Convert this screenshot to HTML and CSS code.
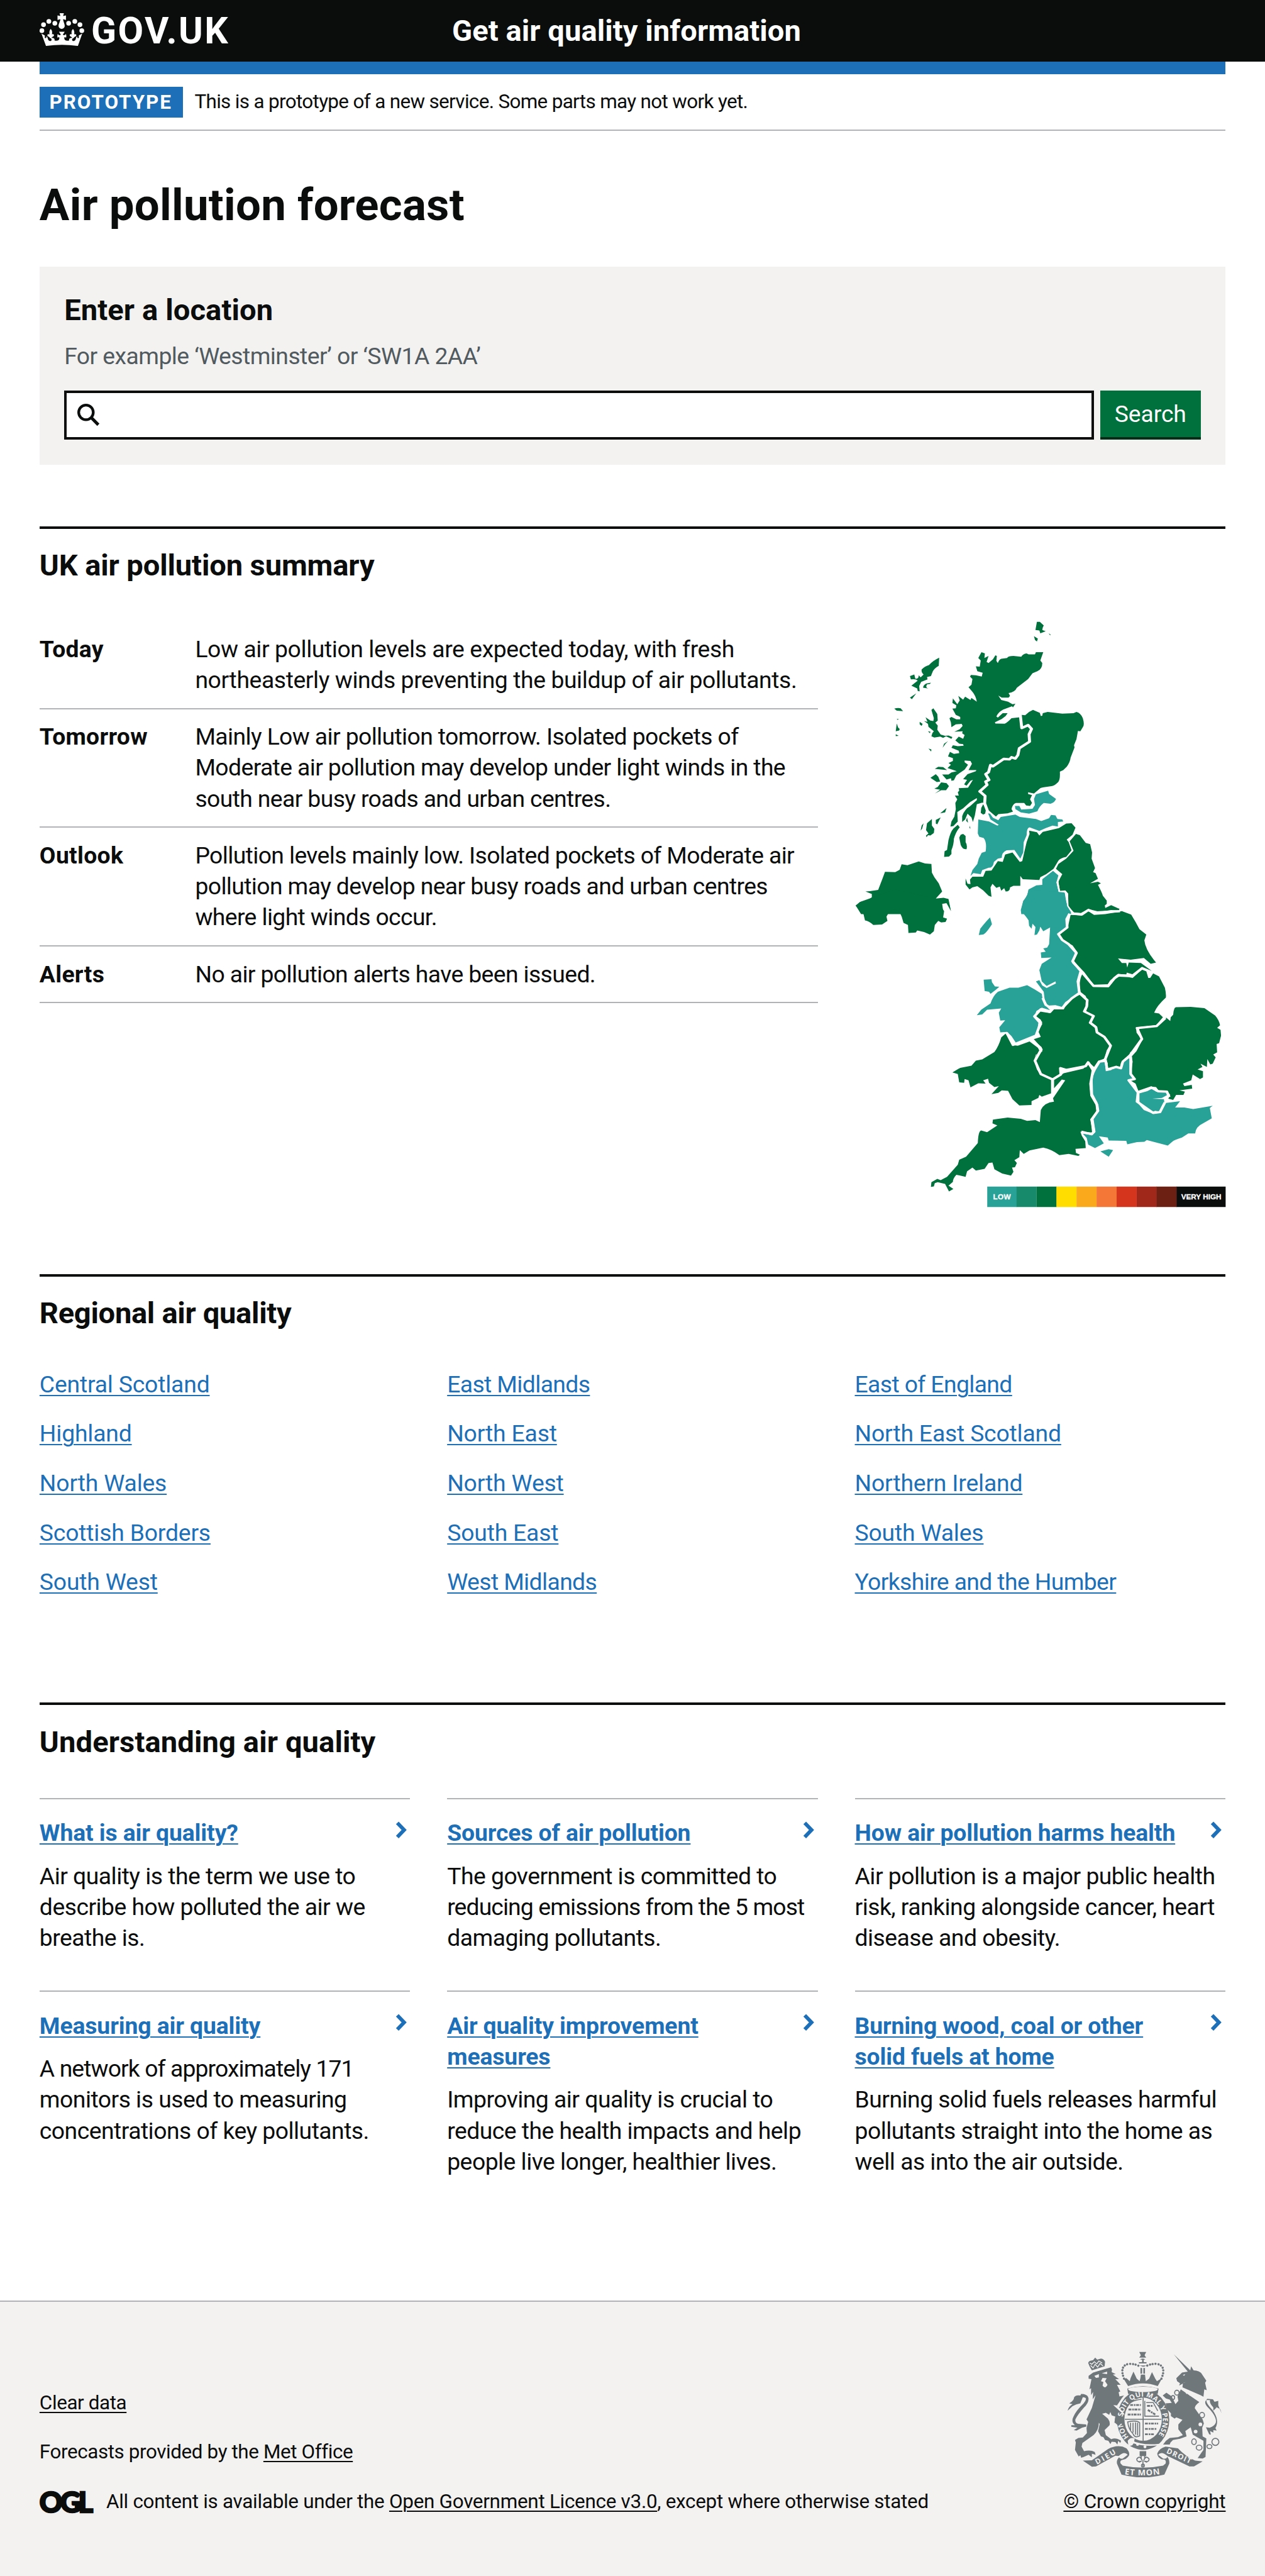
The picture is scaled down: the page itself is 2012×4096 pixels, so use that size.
FILE: index.html
```html
<!DOCTYPE html>
<html lang="en">
<head>
<meta charset="utf-8">
<title>Air pollution forecast - GOV.UK</title>
<link rel="stylesheet" href="styles.css">
</head>
<body>
<header class="header">
  <div class="header-logo">
    <svg class="crown" viewBox="24 33 216 159" aria-hidden="true">
      <g fill="#fff">
        <path d="M121 33H142L138 47L152 44V66L138 62C138 70 146 85 146 95A15 14 0 0 1 116 95C116 85 125 70 125 62L111 66V44L125 47Z"/>
        <circle cx="98" cy="82" r="11.500"/><circle cx="69" cy="73" r="11.500"/><circle cx="43" cy="89" r="11.500"/><circle cx="35" cy="118" r="11.500"/>
        <circle cx="165" cy="82" r="11.500"/><circle cx="195" cy="73" r="11.500"/><circle cx="220" cy="89" r="11.500"/><circle cx="229" cy="118" r="11.500"/>
        <path d="M55 192L33 132L49 141C51 150 46 154 53 154C58 154 56 149 58 145C66 151 62 166 74 168C84 169 86 156 74 154C73 147 66 148 62 142C60 136 67 132 72 136C71 126 70 119 78 109C87 119 85 127 84 136C90 132 96 137 93 143C90 148 83 147 82 153C91 151 100 157 96 165C106 169 119 167 120 156C121 148 116 147 112 153C109 146 110 141 112 134C116 141 124 141 127 137L118 123H146L137 137C140 141 148 141 152 134C154 141 155 146 152 153C148 147 143 148 144 156C145 167 158 169 168 165C164 157 173 151 182 153C181 147 174 148 171 143C168 137 174 132 180 136C179 127 177 119 186 109C194 119 193 126 192 136C197 132 204 136 202 142C198 148 191 147 190 154C178 156 180 169 190 168C202 166 198 151 206 145C208 149 206 154 211 154C218 154 213 150 215 141L231 132L210 192Q132 181 55 192Z"/>
      </g>
    </svg>
    <span class="header-logotype">GOV.UK</span>
  </div>
  <a class="header-title">Get air quality information</a>
</header>

<div class="container">
  <div class="blue-bar"></div>
  <div class="phase-banner"><strong class="tag">PROTOTYPE</strong><span class="phase-text">This is a prototype of a new service. Some parts may not work yet.</span></div>

  <main>
    <h1>Air pollution forecast</h1>

    <form class="search">
      <h2>Enter a location</h2>
      <p class="hint">For example ‘Westminster’ or ‘SW1A 2AA’</p>
      <div class="search-row">
        <div class="search-input">
          <svg class="search-icon" viewBox="0 0 36 36" aria-hidden="true"><circle cx="14" cy="14" r="11.800" fill="none" stroke="#0b0c0c" stroke-width="4.400"/><path d="M22.500 22.500L34 34" stroke="#0b0c0c" stroke-width="5"/></svg>
        </div>
        <button type="button" class="search-button">Search</button>
      </div>
    </form>

    <section class="section summary">
      <h2>UK air pollution summary</h2>
      <div class="summary-grid">
        <dl class="summary-list">
          <div class="summary-row"><dt>Today</dt><dd>Low air pollution levels are expected today, with fresh<br>northeasterly winds preventing the buildup of air pollutants.</dd></div>
          <div class="summary-row"><dt>Tomorrow</dt><dd class="tight">Mainly Low air pollution tomorrow. Isolated pockets of<br>Moderate air pollution may develop under light winds in the<br>south near busy roads and urban centres.</dd></div>
          <div class="summary-row"><dt>Outlook</dt><dd class="tight">Pollution levels mainly low. Isolated pockets of Moderate air<br>pollution may develop near busy roads and urban centres<br>where light winds occur.</dd></div>
          <div class="summary-row"><dt>Alerts</dt><dd class="tight">No air pollution alerts have been issued.</dd></div>
        </dl>
        <svg class="map" viewBox="1384 1006 600 956" role="img" aria-label="Map of UK air pollution by region">
          <!-- Scotland and northern England -->
          <g transform="translate(1370 980) scale(.39541 .33333)" fill="#00703c">
            <path d="M780 80L792 80L808 98Q802 110 802 120L816 126L794 136L790 122L774 120ZM768 150L784 162L780 176L772 168ZM828 136L836 142L834 146Z"/>
            <path d="M380 254L378 294Q362 304 354 320L346 344L330 348L332 360L306 372L298 392L300 418L292 416L290 404L266 390L292 366Q284 356 264 360L260 344L278 336L282 356Q296 360 296 340L304 350L316 336Q306 326 308 312Q320 296 338 290Q352 270 380 254ZM326 380L346 376L342 382L330 384Q322 400 336 404L314 400Q314 388 326 380ZM286 428L268 456L260 448ZM196 502Q210 496 222 500L232 514L206 512ZM206 552L214 552L210 557ZM206 574L212 594L218 600L216 608L202 612ZM202 626L214 634L202 635Z"/>
            <path d="M356 500L372 528L374 560L364 570L374 584L372 604L386 628L404 634L418 632L434 640L430 648L408 636L396 644L384 638L360 642L348 636L352 620L358 612L336 590L334 576L318 562L332 566L324 544L344 560L356 562L358 548L348 508ZM416 660L406 672L394 692L400 672ZM300 566L312 576L308 586L300 578ZM334 612L344 614L342 622ZM336 696L348 700L347 710Z"/>
            <path d="M362 794L376 784L396 786L412 800ZM344 838L366 820L376 832L384 856L370 858ZM360 890L374 882L388 860L410 864L420 878L408 898L388 898L362 914L384 896ZM410 984L404 1006L384 1010ZM386 1030L380 1044L372 1064L366 1060L366 1042ZM350 1038L350 1070L360 1086L358 1106L344 1118L334 1116L328 1126L326 1118L336 1108L326 1092L330 1058ZM316 1058L310 1084L304 1094L308 1070Z"/>
            <path d="M456 1066L464 1078Q448 1100 440 1134Q440 1160 430 1190L430 1208L420 1220L400 1222L402 1194L412 1188L418 1140Q426 1100 438 1084ZM478 1110L488 1120L488 1150Q496 1164 492 1184Q476 1188 468 1164L462 1128L468 1114ZM560 966L572 990L568 1012L560 1016L550 1008L552 984ZM494 1030L498 1056L490 1046ZM504 1070L508 1084L504 1082Z"/>
            <path d="M553 228L567 234L565 256L582 246L574 275L582 280L600 262L610 243L616 246L614 270L620 280Q626 262 634 260L658 256Q662 246 684 246L716 250Q722 236 738 234L746 238L772 238L776 228L806 228L794 268L802 280Q802 310 782 320L762 330L744 358L698 400Q690 422 664 426L670 440L664 448L636 448L622 438L634 460L662 468L680 480L692 478L682 496L678 490L642 506Q620 520 614 540L620 545L640 524L660 524L652 538L636 552L608 568L610 574L648 575Q660 568 676 548L716 543L718 532L732 534L748 518L764 508L792 522L796 538L802 536L804 524L824 518L884 526L930 524L942 518Q960 524 968 548Q976 580 968 592L958 612L948 610L942 650L932 680L934 690L918 740Q916 762 902 784L888 800L874 808Q876 850 866 860Q850 878 840 878Q800 884 794 888L768 914L744 908L744 916L760 922L752 942L760 960L752 974L736 972L728 960L694 960Q680 966 676 990L682 1002L660 1010L622 1014L612 1026L594 1014L580 996L568 962L556 958L534 966L526 1020L518 1052L512 1030L496 1012L486 1040L474 1052L474 1024Q484 990 506 976L534 946L534 936L506 956L478 986L454 1004L456 1050L438 1072L426 1074L430 1050L442 1026L448 990L446 960L454 942L444 924L460 924L456 908L462 900L460 888L498 886L518 848L508 852L492 876L482 870L494 848L478 844L496 820L530 806L532 800L500 800L514 770L508 756L484 754L484 762L498 774L484 798L450 826L440 850L430 852L428 840L410 846L392 822L418 822L430 812L452 806L414 790L428 774L418 766L436 756L436 742L416 734L424 712L440 722L462 718L460 706L430 692L436 680L456 684L480 682L478 674L462 672L446 656L460 638L478 648L484 630L474 622L476 612L442 614L464 602L476 586L472 576L448 578L430 592L428 570L422 548L430 542L450 554L466 554L466 542L448 532L434 502L448 500L450 486L434 474L436 452L454 480L464 462L458 440L478 458L486 444L508 460L512 450L534 468Q530 440 516 420L500 398L512 386L516 358L506 346L510 338L530 340L554 346L558 328L536 320L530 296L546 298L550 268L540 256Z"/>
            <path fill="none" stroke="#fff" stroke-width="12" stroke-linejoin="round" d="M712 532L718 596L744 582L758 600L748 626L750 662L708 694L702 728L692 744L676 738L668 748L644 746L600 782L590 776L582 810L570 820L584 848L570 856L576 872L546 904L568 926L566 962L578 1000L612 1034"/>
            <path fill="#28a197" d="M776 918L826 900L830 916L858 940Q856 954 836 964L808 960Q790 976 782 1000L748 1012L714 1006L692 990L690 974L708 974L716 992L762 988L772 970L768 940ZM540 1040L584 1050L618 1070L624 1066L590 1040L580 1010L588 1012L600 1032L622 1044L632 1028L692 1016L710 1028L776 1038L798 1048L830 1034L838 1018L856 1020L864 1038L884 1040L888 1050L866 1052L866 1074L844 1070L816 1082L790 1096L750 1078Q738 1080 738 1116L726 1150L724 1200L712 1230L688 1188L656 1190Q636 1200 636 1226L620 1230L604 1246Q600 1276 584 1274L556 1286L550 1306L520 1300L508 1314L516 1286L536 1256L542 1230L554 1202L570 1196Q576 1150 562 1130L544 1124L538 1108Z"/>
            <path d="M748 1094L780 1102L790 1118L804 1100L870 1082L900 1060L922 1058L938 1080L926 1114L902 1138L910 1150L922 1190L900 1222Q876 1228 868 1240L848 1280L818 1306L794 1320L790 1334L722 1330L712 1314L712 1362L684 1362L670 1370Q670 1390 652 1390L646 1374L634 1386L628 1366L614 1372L598 1352L590 1370L594 1416L582 1410L560 1384L536 1364L516 1370L504 1380L488 1356L488 1326L496 1352L508 1354L506 1332L516 1318L560 1318L570 1290L594 1288L620 1242L640 1246L650 1210L680 1200L710 1246L720 1242L730 1190L738 1150L750 1110Z"/>
            <path d="M940 1110L956 1116L980 1154L998 1160L1006 1200L1004 1230L1018 1276L1010 1296L1020 1300L1030 1328L998 1350L1030 1342L1042 1350L1030 1358Q1046 1394 1050 1410L1066 1434L1066 1450L1058 1458L1060 1470L1084 1456L1118 1474L1116 1482L1084 1480L1050 1486L1024 1490L992 1474L960 1494L932 1492L908 1460L908 1400L896 1384L874 1388L868 1340L884 1306L858 1280L868 1256L900 1230L930 1192L914 1146Z"/>
            <path fill="#28a197" d="M846 1290L868 1312L860 1346L870 1394L894 1396L900 1440L922 1500H716L714 1480L724 1436Q744 1408 746 1380L778 1360L802 1358L802 1330Z"/>
            <path fill="none" stroke="#fff" stroke-width="7" stroke-linejoin="round" d="M848 1284L876 1308L864 1344L872 1390L896 1390L904 1406L906 1460L926 1494"/>
            <path d="M38 1458L56 1440L80 1438L104 1418L104 1402L78 1390L96 1388L130 1382L148 1326L158 1294L200 1296L218 1284L226 1258L250 1262L296 1244L322 1254L348 1256L350 1298L360 1320L378 1350L392 1390L366 1424L398 1420L418 1426L428 1485L410 1446L392 1450L398 1500H60Z"/>
          </g>
          <!-- Northern Ireland, England and Wales -->
          <g transform="translate(1370 1440) scale(.39541 .33801)" fill="#00703c">
            <path d="M38 78L70 118L76 148Q92 150 110 170L146 168L168 150L164 130Q176 100 196 96Q212 96 218 108Q228 130 234 160L252 170L254 208L284 206L290 196L318 204L342 216L358 200L362 170L376 150L388 158L406 156L412 140L396 134L400 104L388 82L392 66L404 62Q420 68 428 104L416 46L368 44L200 0L60 58Z"/>
            <path fill="#28a197" d="M588 134L596 166Q570 214 558 216L542 218L548 188Q574 150 588 134ZM746 0L740 30L724 56L716 104Q736 130 746 148L748 174L758 188L762 164L774 180L770 218L780 216L790 196L794 178L806 200L834 182L830 262L822 278L806 282L816 298L796 302L798 328L840 326L800 356L790 386L800 440L820 462L856 440L858 450L820 472L802 460L790 434L776 440L808 490L812 530L824 556L856 554L882 562L896 540L950 496L944 440L958 394L924 352L936 302L908 260L884 244L864 212L900 180L898 140L920 110L904 80L896 40L892 14Z"/>
            <path d="M918 122L964 124L990 104L1014 122L1060 118L1128 104L1166 120L1184 156L1200 190L1228 216L1220 244Q1224 290 1268 350L1246 356L1218 328L1164 336L1112 330L1128 352L1146 352L1150 374L1156 350L1206 352L1250 390L1210 370L1184 404L1172 406L1148 398L1146 408L1112 404L1080 436L1070 454L1012 456L974 396L946 362L930 340L946 300L926 268L884 240L874 214L906 184Z"/>
            <path d="M966 404L1012 466L1074 468L1100 430L1116 418L1156 420L1172 424L1210 384L1228 392L1236 424L1244 424L1256 402L1280 416L1304 470Q1310 500 1308 518Q1272 556 1260 590L1280 594L1296 612L1268 650L1186 660L1188 686L1206 714L1188 760L1162 780L1160 796L1124 830L1122 850L1104 844L1090 862L1068 856L1070 832L1060 806L1070 770L1084 748L1060 706L1026 680L1020 650L998 636L1016 610L980 590L990 550L980 510L958 490Q950 440 966 404Z"/>
            <path d="M1310 614L1326 630L1328 612L1338 600Q1340 564 1350 564L1410 562L1466 568L1510 604Q1526 626 1530 650L1518 662L1532 672L1534 700L1526 736L1516 740L1518 780L1502 790L1512 804L1500 834L1490 838L1478 812L1476 850L1450 834L1458 850L1438 862L1460 870L1460 900L1448 908L1418 886L1412 914L1378 930L1384 942L1414 936L1416 954L1364 962L1386 968L1380 984L1350 984L1338 1008L1318 1002L1326 984L1312 964L1278 962L1268 946L1246 944L1228 958L1196 966L1184 930L1160 912L1184 908L1166 880L1172 824L1168 800L1188 774L1214 716L1196 680L1200 666L1272 656L1286 634Z"/>
            <path fill="#28a197" d="M1158 808L1168 830L1160 884L1182 906L1152 914L1172 930L1190 970L1188 1016L1218 1056L1256 1074L1284 1070L1308 1022L1366 1014L1346 1044L1384 1044L1420 1052L1500 1036L1488 1046L1496 1096L1460 1120Q1430 1136 1428 1168L1400 1168L1374 1188Q1340 1200 1334 1208L1316 1226L1230 1200L1220 1208L1190 1210L1150 1220L1146 1204L1074 1202L1070 1188L1034 1182L1054 1216L1018 1238L990 1222L984 1190L968 1170L1006 1176L1020 1160L1012 1100L1034 1060L1028 1020L1010 980L1008 900L1034 826L1058 822L1062 870L1082 866L1104 854L1122 860L1136 826ZM1200 976L1232 966L1252 954L1268 968L1312 972L1314 984L1292 998L1252 1002L1300 1004L1302 1020L1284 1064L1264 1060L1252 1066L1218 1040L1200 1018ZM1040 1254L1074 1244L1092 1248L1074 1280Z"/>
            <path d="M960 502L980 530L984 550L970 584L1006 606L994 640L1018 660L1026 688L1052 706L1078 748L1066 770L1056 810L1030 822L1014 850L988 822L970 850L904 862L874 850L880 888L846 906L796 880Q774 850 768 820L780 786L802 776L800 756L764 718L796 706L786 680L802 644L796 624L776 606L790 584L834 592L848 574L890 574L900 552L926 520Z"/>
            <path fill="#28a197" d="M668 470L704 470L740 458L770 478L800 500L804 532L824 566L834 578L800 566L778 582L768 614L786 638L780 690L770 706L730 722L696 738L676 702L658 682L630 684L626 660L650 626L630 628L624 590L634 570L576 576L556 598L534 602L552 576L590 546Q600 510 620 490ZM562 432L594 430L596 444L608 464L626 466L612 480L590 500L584 490L566 486Z"/>
            <path d="M652 690L672 722L682 746L702 748L750 728L784 758L794 780L776 790L768 820L780 862L794 886L812 890L838 910L838 976L800 992L790 984L786 998L758 1014L758 1032L708 1034L680 1004L662 964L636 962L622 974L594 980L624 942L606 946L584 926L580 906L560 914L570 930L540 928L508 948L500 914L484 908L482 926L462 924L456 884L434 876L466 854L512 844L530 820L556 814L606 778Q624 750 634 708Z"/>
            <path d="M850 910L890 880L970 858L990 836L1006 870L996 930L1000 990L1020 1030L1024 1070L1000 1100L1006 1164L958 1160L964 1180L978 1206L980 1238L938 1242L940 1262L956 1270L950 1276L910 1266L872 1272Q840 1244 806 1236L750 1250L726 1266L710 1248L708 1282L688 1296L698 1310L690 1330L678 1332L684 1352L674 1370L638 1360L606 1340L598 1308L582 1310L566 1338L530 1346L516 1332L494 1350L488 1376L450 1366Q436 1384 436 1400L418 1418L438 1434L420 1446L404 1410L374 1402L362 1406L358 1422L346 1424L348 1402L372 1386L386 1392L412 1376L456 1318L462 1294L490 1280L538 1214Q540 1156 552 1154L576 1162L618 1130L598 1120L600 1102L660 1092L714 1098L740 1108L774 1104L792 1114L796 1056Q810 1020 850 1016L846 1000L896 914L882 910L850 952Z"/>
            <path fill="none" stroke="#fff" stroke-width="11" stroke-linejoin="round" d="M920 114L964 120L990 99L1026 110L1120 104M914 116L902 142L904 182L868 214L884 242L910 262L942 304L926 344L960 390L1012 462H1072L1098 424L1114 410L1170 414L1212 376M960 390L948 440L954 496L986 530L984 560L974 584L1012 606L998 638L1022 660L1026 684L1056 706L1082 748L1060 812L1068 862L1104 850L1124 856L1132 824L1160 796L1210 716L1190 664L1270 654L1306 616M954 496L922 522L884 568H836L816 552L804 520M846 570L834 586L796 574L770 608L796 636L776 700L682 744L656 686M760 716L798 766L772 820L796 884L844 910L844 980M844 910L878 886L876 856L900 864L980 846L990 828L1010 864L1000 930L1004 986L1026 1030L1030 1060L1004 1102L1014 1160L1004 1172L962 1160M1012 870L1036 824L1062 820M1164 800L1164 884L1180 908L1156 914L1194 972L1190 1016L1256 1070L1284 1066L1304 1020M1194 970L1248 948L1276 966L1312 968L1322 994"/>
          </g>
          <!-- Index scale -->
          <g>
            <path fill="#28a197" d="M1598 1921h48v33h-48z"/><path fill="#168a6b" d="M1645.500 1921h32.500v33h-32.500z"/><path fill="#00703c" d="M1678 1921h32.500v33H1678z"/><path fill="#fd0" d="M1710 1921h32.500v33H1710z"/><path fill="#faa91c" d="M1742.500 1921h32.500v33h-32.500z"/><path fill="#f47738" d="M1775 1921h32.500v33H1775z"/><path fill="#d4351c" d="M1807.500 1921h32.500v33h-32.500z"/><path fill="#a0281a" d="M1840 1921h32.500v33H1840z"/><path fill="#6c2014" d="M1872 1921h33v33h-33z"/><path fill="#0b0c0c" d="M1904.500 1921H1984v33h-79.500z"/>
            <text x="1607.500" y="1942" class="scale-label" textLength="28.500">LOW</text>
            <text x="1912" y="1942" class="scale-label" textLength="65">VERY HIGH</text>
          </g>
        </svg>
      </div>
    </section>

    <section class="section regions">
      <h2>Regional air quality</h2>
      <ul class="region-list">
        <li><a>Central Scotland</a></li><li><a class="tight">East Midlands</a></li><li><a class="tight">East of England</a></li>
        <li><a>Highland</a></li><li><a>North East</a></li><li><a>North East Scotland</a></li>
        <li><a>North Wales</a></li><li><a>North West</a></li><li><a>Northern Ireland</a></li>
        <li><a>Scottish Borders</a></li><li><a>South East</a></li><li><a>South Wales</a></li>
        <li><a>South West</a></li><li><a class="tight">West Midlands</a></li><li><a class="tight">Yorkshire and the Humber</a></li>
      </ul>
    </section>

    <section class="section topics">
      <h2>Understanding air quality</h2>
      <div class="cards">
        <article class="card"><div class="card-head"><h3><a>What is air quality?</a></h3><svg class="chevron" viewBox="0 0 19 28"><path d="M3 2.500L14 14L3 25.500"/></svg></div><p>Air quality is the term we use to<br>describe how polluted the air we<br>breathe is.</p></article>
        <article class="card"><div class="card-head"><h3><a>Sources of air pollution</a></h3><svg class="chevron" viewBox="0 0 19 28"><path d="M3 2.500L14 14L3 25.500"/></svg></div><p>The government is committed to<br><span class="tighter">reducing emissions from the 5 most</span><br>damaging pollutants.</p></article>
        <article class="card"><div class="card-head"><h3><a>How air pollution harms health</a></h3><svg class="chevron" viewBox="0 0 19 28"><path d="M3 2.500L14 14L3 25.500"/></svg></div><p>Air pollution is a major public health<br>risk, ranking alongside cancer, heart<br>disease and obesity.</p></article>
        <article class="card"><div class="card-head"><h3><a>Measuring air quality</a></h3><svg class="chevron" viewBox="0 0 19 28"><path d="M3 2.500L14 14L3 25.500"/></svg></div><p><span class="tighter">A network of approximately 171</span><br>monitors is used to measuring<br>concentrations of key pollutants.</p></article>
        <article class="card"><div class="card-head"><h3><a>Air quality improvement<br>measures</a></h3><svg class="chevron" viewBox="0 0 19 28"><path d="M3 2.500L14 14L3 25.500"/></svg></div><p>Improving air quality is crucial to<br>reduce the health impacts and help<br>people live longer, healthier lives.</p></article>
        <article class="card"><div class="card-head"><h3><a>Burning wood, coal or other<br>solid fuels at home</a></h3><svg class="chevron" viewBox="0 0 19 28"><path d="M3 2.500L14 14L3 25.500"/></svg></div><p>Burning solid fuels releases harmful<br>pollutants straight into the home as<br>well as into the air outside.</p></article>
      </div>
    </section>
  </main>
</div>

<footer class="footer">
  <div class="footer-meta">
    <p><a>Clear data</a></p>
    <p>Forecasts provided by the <a>Met Office</a></p>
    <p class="licence"><span class="ogl">OGL</span><span class="licence-text">All content is available under the <a>Open Government Licence v3.0</a>, except where otherwise stated</span></p>
  </div>
  <div class="footer-crest">
    <svg class="crest" viewBox="144 78 750 612" aria-hidden="true">
      <g fill="#6f777b">
        <!-- lion -->
        <path d="M246 196L268 180L354 152L360 166L358 178L378 188L364 190L394 212L376 212L402 240L384 240L400 272L392 276L396 296L418 292L408 304L384 340L414 376L420 436L398 436L388 424L372 424L376 394L358 388L352 372L346 386L330 376L312 380L340 404Q352 420 348 436L324 460L330 484L356 504Q380 494 404 512L400 522L390 512L386 530L376 518L358 516L352 528L342 512L326 508L318 494L306 490L292 466L300 430L296 424Q296 460 270 484L216 522L212 540L224 562Q256 554 276 566L280 580L262 574V592L246 580L222 590L210 594L206 582L198 588L180 556L184 520L180 508L196 498L218 496L238 474L236 450L244 420L236 408L262 352L280 290L266 310L268 274L258 290V256L250 262L260 212L246 210Z"/>
        <path d="M244 134Q246 126 252 124L268 120L278 108L288 118L306 112Q322 114 326 128L324 150L262 170Q250 152 244 134Z"/>
        <path d="M144 366Q150 344 168 334L152 330Q174 318 176 300Q184 288 206 292L210 284Q244 284 246 308Q246 330 222 352Q190 388 182 408Q178 430 206 430L234 432L236 442L214 448L188 462L174 460L192 448L162 444V436L180 436Q160 420 172 396Q184 366 222 330Q246 300 218 300L206 330Q184 334 168 344Z"/>
        <!-- unicorn -->
        <path d="M660 92L740 170L744 150L756 170Q786 170 798 190L818 220L812 230L820 266L808 262L804 298L790 290L702 252L704 232L720 226Q706 228 700 236L686 244L690 232L676 222L672 208L700 180L728 176Z"/>
        <path d="M694 262L784 324Q762 340 762 354L800 408L806 428L798 448L800 490L818 500L816 550L814 590L800 598L776 596L794 570L804 556L804 512L752 482L742 446L716 464L722 490L690 502L656 508L644 520L640 530L608 530L622 512L640 498L680 494L704 484L682 456L682 432L702 410L672 398L664 404L646 392V378L628 360L620 330L650 328L640 312L622 306L606 292L624 278L650 296L668 334L682 318L678 296Z"/>
        <path d="M892 378L886 358L858 344L868 350L852 366L852 350Q830 326 836 314L818 314Q802 328 832 356Q870 398 864 424Q858 440 834 448L816 446L832 480L840 482L836 464L852 472V460L868 462L862 450Q884 412 848 362Q808 322 822 308L850 310L858 322L876 318L876 340Z"/>
        <!-- crown -->
        <path d="M438 246L416 210L430 208L446 222L450 208L464 176L480 210L494 222L498 206L500 190H520L524 222L540 210L554 178L570 210L578 222L604 206L582 246Q510 220 438 246Z"/>
        <path d="M492 80H526L518 96L526 108H492L500 96ZM490 136Q492 112 509 112Q526 112 528 136ZM494 146H526Q520 152 510 152ZM498 158h8v28h-8zM512 158h8v28h-8z"/>
        <path fill="none" stroke="#6f777b" stroke-width="11" stroke-linecap="round" stroke-dasharray="0.100 13.500" d="M418 210Q394 146 442 138Q478 138 496 152M600 210Q626 146 576 138Q540 138 522 152"/>
        <path d="M434 258Q510 236 586 258L582 284H438Z"/>
        <ellipse cx="511" cy="409" rx="127" ry="147"/>
        <path d="M218 608L262 606Q300 580 340 552Q390 526 430 548Q448 568 442 584Q430 600 420 602Q394 606 402 622L412 632Q510 652 608 632L620 622Q626 600 602 602Q578 590 580 572Q590 548 620 540L680 548Q720 590 764 608L800 612L758 636L736 636L640 590L624 584Q640 600 638 622L614 676Q560 690 510 690T406 676L384 622Q380 600 402 586L376 584L282 636L262 638Z"/>
        <path d="M494 562h32v24h-32z"/>
      </g>
      <g fill="#f3f2f1">
        <path d="M274 196L296 188V204L282 206ZM310 184L336 176V188ZM314 206L334 208L326 222L338 240Q326 262 314 244L318 226L306 222ZM704 192L716 188L710 196ZM248 178L356 148L354 155L252 184Z"/>
        <ellipse cx="510" cy="262" rx="72" ry="13"/><path d="M490 118h16v12h-16zM514 118h14v12h-14z"/>
        <ellipse cx="511" cy="407" rx="91" ry="105"/>
        <path d="M392 586Q420 560 436 580L412 598Q396 602 392 586ZM630 586Q600 560 584 580L608 598Q626 602 630 586Z"/>
        <path d="M384 340L418 378L420 388L366 338ZM436 512Q448 492 470 500L466 522L458 534L440 538Z"/>
        <circle cx="484" cy="529" r="7"/><circle cx="520" cy="541" r="7"/><circle cx="789" cy="432" r="9"/><circle cx="766" cy="467" r="9"/>
        <path d="M456 510Q510 536 590 526L586 534Q510 542 452 520Z"/>
      </g>
      <g fill="none" stroke="#f3f2f1" stroke-width="4"><path d="M702 264L784 308M710 262L722 282L730 268L738 290L748 276L756 298L766 286L772 306M256 146L268 158L278 140L290 154L302 136L316 148M252 134L262 140L274 128L286 138L296 124L312 134"/></g>
      <g fill="none" stroke="#6f777b" stroke-width="5">
        <path d="M422 407H600M511 302V512M430 348Q446 316 503 310M519 318V392H588M526 326H560L582 366"/>
        <path stroke-width="9" stroke-dasharray="14 4 8 3" d="M448 338H500M440 360H500M436 384H500M530 342H560M534 362L570 384M520 428H584M520 454H578M520 480H566"/>
        <path stroke-width="5" d="M436 420Q480 410 494 424V488Q470 500 462 478Q440 456 436 420ZM450 424V460M462 424V472M474 422V482M484 424V486"/>
        <ellipse cx="675" cy="278" rx="11" ry="12"/><ellipse cx="656" cy="302" rx="8" ry="10"/><ellipse cx="663" cy="360" rx="12" ry="14"/><ellipse cx="797" cy="387" rx="12" ry="13"/><ellipse cx="758" cy="516" rx="11" ry="14"/><ellipse cx="783" cy="545" rx="14" ry="12"/><ellipse cx="833" cy="540" rx="12" ry="10"/><circle cx="862" cy="517" r="17"/>
        <path d="M510 570Q494 590 506 606Q494 580 480 600Q480 618 504 610L490 616M510 570Q526 590 514 606Q526 580 540 600Q540 618 516 610L530 616M510 606V636"/>
        <circle cx="510" cy="632" r="7"/>
      </g>
      <path id="garter" fill="none" d="M446 498A98 114 0 1 1 576 494"/>
      <path id="dieu" fill="none" d="M286 628Q340 600 392 566"/>
      <path id="droit" fill="none" d="M622 570Q680 596 744 626"/>
      <path id="mon" fill="none" d="M420 674Q510 688 600 672"/>
      <g class="motto">
        <text font-size="34"><textPath href="#garter" startOffset="6" textLength="500">HONI SOIT QUI MAL Y PENSE</textPath></text>
        <text font-size="36"><textPath href="#dieu" textLength="110">DIEU</textPath></text>
        <text font-size="36"><textPath href="#droit" textLength="128">DROIT</textPath></text>
        <text font-size="40"><textPath href="#mon" textLength="174">ET MON</textPath></text>
      </g>
      <path fill="#6f777b" d="M376 394L414 396L422 440L404 428L388 436L372 422Z"/>
    </svg>
    <a class="copyright">© Crown copyright</a>
  </div>
</footer>
</body>
</html>
```
FILE: styles.css
```css
/* 1rem is ten design pixels at double density */
html { font-size: 19.6466px; }
* { box-sizing: border-box; }
body {
  margin: 0;
  min-height: 100vh;
  display: flex;
  flex-direction: column;
  background: #fff;
  color: #0b0c0c;
  font-family: Roboto, "Noto Sans", sans-serif;
  font-size: 1.9rem;
  line-height: 2.5rem;
  letter-spacing: -.011em;
}
h1, h2, h3, p, ul, dl, dd { margin: 0; padding: 0; }
h1, h2, h3, dt { font-weight: 700; letter-spacing: 0; }
a { text-decoration: underline; text-decoration-thickness: 2px; text-underline-offset: 4px; }
svg { display: block; }
.tight { letter-spacing: -.0165em; }
.tighter { letter-spacing: -.022em; }

.header { display: flex; align-items: center; height: 5rem; padding: 0 3.2rem; background: #0b0c0c; color: #fff; }
.header-logo { display: flex; align-items: center; width: 33.4rem; }
.crown { width: 3.6rem; height: 2.65rem; margin-top: -.2rem; }
.header-logotype { margin-left: .58rem; font-size: 3rem; font-weight: 700; letter-spacing: .041em; line-height: 3rem; }
.header-title { font-size: 2.4rem; font-weight: 700; letter-spacing: .001em; text-decoration: none; line-height: 3rem; }

.container { padding: 0 3.2rem; }
.blue-bar { height: 1rem; background: #1d70b8; }
.phase-banner { display: flex; align-items: center; padding: 1rem 0; border-bottom: 2px solid #b1b4b6; font-size: 1.6rem; letter-spacing: -.021em; }
.tag { width: 11.6rem; height: 2.5rem; padding-left: .8rem; background: #1d70b8; color: #fff; font-weight: 700; letter-spacing: .062em; line-height: 2.5rem; }
.phase-text { margin-left: .95rem; line-height: 2.4rem; }

h1 { margin: 4rem 0 3rem; font-size: 3.6rem; line-height: 4rem; letter-spacing: .004em; }
h2 { font-size: 2.4rem; line-height: 3rem; letter-spacing: -.003em; }

.search { padding: 2rem; background: #f3f2f1; }
.search h2, .topics > h2 { letter-spacing: .002em; }
.hint { margin: 1rem 0 1.5rem; color: #505a5f; letter-spacing: -.015em; }
.search-row { display: flex; gap: .5rem; height: 4rem; }
.search-input { flex: 1; display: flex; align-items: center; padding-left: .85rem; background: #fff; border: 4px solid #0b0c0c; }
.search-icon { width: 1.8rem; height: 1.8rem; }
.search-button { width: 8.15rem; padding: 0; border: 0; border-bottom: 4px solid #002d18; background: #00703c; color: #fff; font: inherit; letter-spacing: -.003em; }

.section { border-top: 4px solid #0b0c0c; padding-top: 1.5rem; }
.summary { margin-top: 5rem; }
.regions { margin-top: 5rem; }
.regions > h2 { letter-spacing: -.007em; }
.topics { margin-top: 7rem; padding-bottom: 10rem; }

.summary-grid { display: grid; grid-template-columns: 63rem 30rem; justify-content: space-between; align-items: start; margin-top: 3rem; }
.summary-row { display: grid; grid-template-columns: 12.6rem 1fr; padding: 1rem 0; border-bottom: 2px solid #b1b4b6; }
.summary-row dt { letter-spacing: .008em; }
.map { width: 30rem; height: 47.8rem; overflow: visible; }
.scale-label { font: 700 12px "Liberation Sans", Arial, sans-serif; letter-spacing: 0; fill: #fff; stroke: #fff; stroke-width: .3px; }

.region-list { display: grid; grid-template-columns: repeat(3, 30rem); column-gap: 3rem; margin-top: 3rem; list-style: none; }
.region-list li { padding-bottom: 1.5rem; letter-spacing: -.005em; }
.region-list a, .card a { color: #1d70b8; }

.cards { display: grid; grid-template-columns: repeat(3, 30rem); column-gap: 3rem; row-gap: 3rem; margin-top: 3rem; }
.card { border-top: 2px solid #b1b4b6; padding-top: 1.5rem; }
.card-head { display: flex; justify-content: space-between; }
.card h3 { font-size: 1.9rem; line-height: 2.5rem; letter-spacing: -.003em; white-space: nowrap; }
.card p { margin-top: 1rem; white-space: nowrap; letter-spacing: -.014em; }
.card .tighter { letter-spacing: -.024em; }
.chevron { width: .95rem; height: 1.4rem; margin: .3rem .25rem 0 0; fill: none; stroke: #1d70b8; stroke-width: 6px; }

.footer { flex: 1; display: flex; justify-content: space-between; align-items: flex-end; padding: 4rem 3.2rem 5.05rem; border-top: 2px solid #b1b4b6; background: #f3f2f1; font-size: 1.6rem; line-height: 2rem; letter-spacing: -.013em; }
.footer-meta p + p { margin-top: 2rem; }
.licence { display: flex; align-items: center; }
.licence-text { letter-spacing: -.009em; }
.ogl { width: 5.4rem; font-family: Lato, Inter, sans-serif; font-size: 2.3rem; font-weight: 900; letter-spacing: -.085em; -webkit-text-stroke: 2.5px #0b0c0c; }
.footer-crest { width: 13.1rem; display: flex; flex-direction: column; align-items: center; }
.crest { width: 12.5rem; height: 10.2rem; margin-bottom: .95rem; }
.motto { font-family: "Open Sans", "Noto Sans", sans-serif; font-weight: 700; letter-spacing: 0; fill: #f3f2f1; }
.copyright { letter-spacing: -.004em; white-space: nowrap; }
```
